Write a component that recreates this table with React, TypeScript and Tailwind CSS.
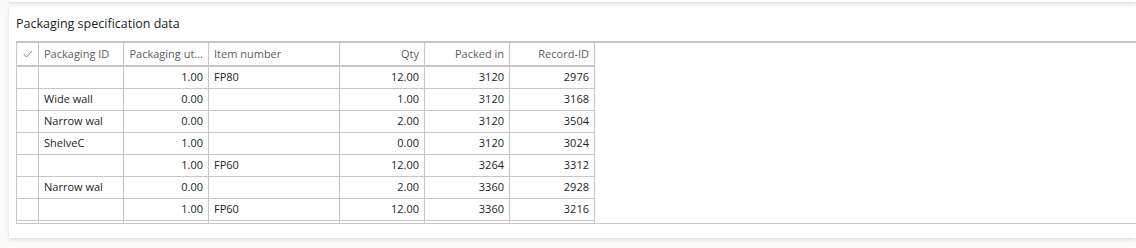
import React from 'react';

type Row = {
  packagingId: string;
  unitQty: string;
  itemNumber: string;
  qty: string;
  packedIn: string;
  recordId: string;
};

const rows: Row[] = [
  { packagingId: '', unitQty: '1.00', itemNumber: 'FP80', qty: '12.00', packedIn: '3120', recordId: '2976' },
  { packagingId: 'Wide wall', unitQty: '0.00', itemNumber: '', qty: '1.00', packedIn: '3120', recordId: '3168' },
  { packagingId: 'Narrow wal', unitQty: '0.00', itemNumber: '', qty: '2.00', packedIn: '3120', recordId: '3504' },
  { packagingId: 'ShelveC', unitQty: '1.00', itemNumber: '', qty: '0.00', packedIn: '3120', recordId: '3024' },
  { packagingId: '', unitQty: '1.00', itemNumber: 'FP60', qty: '12.00', packedIn: '3264', recordId: '3312' },
  { packagingId: 'Narrow wal', unitQty: '0.00', itemNumber: '', qty: '2.00', packedIn: '3360', recordId: '2928' },
  { packagingId: '', unitQty: '1.00', itemNumber: 'FP60', qty: '12.00', packedIn: '3360', recordId: '3216' },
  { packagingId: '', unitQty: '', itemNumber: '', qty: '', packedIn: '', recordId: '' },
];

const cell = 'border-l border-[#c8c6c4] px-[5px] whitespace-nowrap overflow-hidden';

const CheckMark: React.FC = () => (
  <svg width="10" height="8" viewBox="0 0 10 8" className="block">
    <polyline points="0.8,4.2 3.6,7 9.2,0.8" fill="none" stroke="#8a8886" strokeWidth="1" />
  </svg>
);

const App: React.FC = () => {
  return (
    <div
      className="w-[1136px] h-[248px] bg-[#faf9f8] overflow-hidden text-[#201f1e]"
      style={{ fontFamily: '"Open Sans", "Liberation Sans", sans-serif' }}
    >
      <div className="ml-[9px] h-[2px] bg-white shadow-[0_1.6px_3.6px_rgba(0,0,0,0.13),0_0.3px_0.9px_rgba(0,0,0,0.11)]" />
      <div className="ml-[9px] mt-[5px] h-[231px] bg-white pl-[7px] shadow-[0_1.6px_3.6px_rgba(0,0,0,0.13),0_0.3px_0.9px_rgba(0,0,0,0.11)]">
        <div className="h-[34px] flex items-center text-[12.5px] text-[#201f1e]">Packaging specification data</div>
        <div className="border-t-2 border-b border-[#c8c6c4] h-[183px] overflow-hidden">
          <table className="border-collapse text-[11px] table-fixed w-[579px] border-r border-[#c8c6c4]">
            <colgroup>
              <col className="w-[22px]" />
              <col className="w-[85px]" />
              <col className="w-[85px]" />
              <col className="w-[131px]" />
              <col className="w-[85px]" />
              <col className="w-[85px]" />
              <col className="w-[85px]" />
            </colgroup>
            <thead>
              <tr className="h-[23px] border-b-2 border-[#c8c6c4] text-[#605e5c]">
                <th className="border-l border-[#c8c6c4] font-normal">
                  <div className="flex justify-center pl-[1px]">
                    <CheckMark />
                  </div>
                </th>
                <th className={`${cell} text-left font-normal px-[3px]`}>Packaging ID</th>
                <th className={`${cell} text-right font-normal`}>Packaging ut...</th>
                <th className={`${cell} text-left font-normal px-[3px]`}>Item number</th>
                <th className={`${cell} text-right font-normal`}>Qty</th>
                <th className={`${cell} text-right font-normal`}>Packed in</th>
                <th className={`${cell} text-right font-normal`}>Record-ID</th>
              </tr>
            </thead>
            <tbody>
              {rows.map((r, i) => (
                <tr key={i} className="h-[22px] border-b border-[#c8c6c4]">
                  <td className="border-l border-[#c8c6c4]" />
                  <td className={`${cell} text-left px-[3px]`}>{r.packagingId}</td>
                  <td className={`${cell} text-right`}>{r.unitQty}</td>
                  <td className={`${cell} text-left px-[3px]`}>{r.itemNumber}</td>
                  <td className={`${cell} text-right`}>{r.qty}</td>
                  <td className={`${cell} text-right`}>{r.packedIn}</td>
                  <td className={`${cell} text-right`}>{r.recordId}</td>
                </tr>
              ))}
            </tbody>
          </table>
        </div>
      </div>
    </div>
  );
};

export default App;
